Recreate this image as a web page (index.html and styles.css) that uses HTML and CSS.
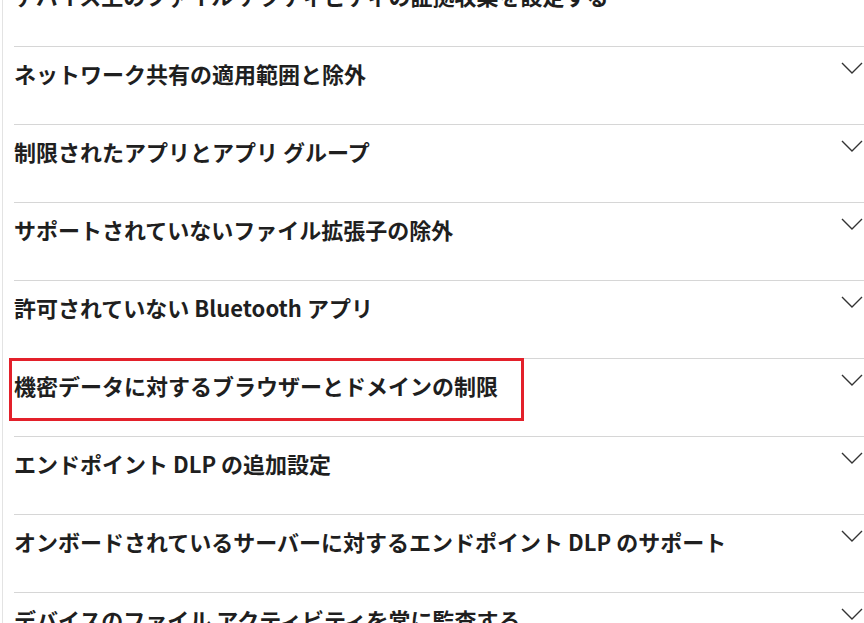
FILE: index.html
```html
<!DOCTYPE html>
<html lang="ja">
<head>
    <meta charset="UTF-8">
    <meta name="viewport" content="width=device-width, initial-scale=1.0">
    <title>エンドポイント DLP の設定</title>
    <link rel="stylesheet" href="styles.css">
</head>
<body>
    <div class="accordion">
        <div class="acc-item">
            <h3 class="acc-title">デバイス上のファイル アクティビティの証拠収集を設定する</h3>
            <svg class="chevron" viewBox="0 0 22 12"><polyline points="1,1 11,11 21,1"/></svg>
        </div>
        <div class="acc-item">
            <h3 class="acc-title">ネットワーク共有の適用範囲と除外</h3>
            <svg class="chevron" viewBox="0 0 22 12"><polyline points="1,1 11,11 21,1"/></svg>
        </div>
        <div class="acc-item">
            <h3 class="acc-title">制限されたアプリとアプリ グループ</h3>
            <svg class="chevron" viewBox="0 0 22 12"><polyline points="1,1 11,11 21,1"/></svg>
        </div>
        <div class="acc-item">
            <h3 class="acc-title">サポートされていないファイル拡張子の除外</h3>
            <svg class="chevron" viewBox="0 0 22 12"><polyline points="1,1 11,11 21,1"/></svg>
        </div>
        <div class="acc-item">
            <h3 class="acc-title">許可されていない Bluetooth アプリ</h3>
            <svg class="chevron" viewBox="0 0 22 12"><polyline points="1,1 11,11 21,1"/></svg>
        </div>
        <div class="acc-item highlighted">
            <h3 class="acc-title">機密データに対するブラウザーとドメインの制限</h3>
            <svg class="chevron" viewBox="0 0 22 12"><polyline points="1,1 11,11 21,1"/></svg>
        </div>
        <div class="acc-item">
            <h3 class="acc-title">エンドポイント DLP の追加設定</h3>
            <svg class="chevron" viewBox="0 0 22 12"><polyline points="1,1 11,11 21,1"/></svg>
        </div>
        <div class="acc-item">
            <h3 class="acc-title">オンボードされているサーバーに対するエンドポイント DLP のサポート</h3>
            <svg class="chevron" viewBox="0 0 22 12"><polyline points="1,1 11,11 21,1"/></svg>
        </div>
        <div class="acc-item">
            <h3 class="acc-title">デバイスのファイル アクティビティを常に監査する</h3>
            <svg class="chevron" viewBox="0 0 22 12"><polyline points="1,1 11,11 21,1"/></svg>
        </div>
    </div>
</body>
</html>
```

FILE: styles.css
```css
body {
    margin: 0;
    background-color: #ffffff;
    font-family: "Noto Sans CJK JP", "Noto Sans", sans-serif;
    color: #1f1f1f;
    overflow: hidden;
}
.accordion {
    margin-top: -32px;
    margin-left: 2px;
    border-left: 1px solid #e3e3e3;
    padding-left: 11px;
    min-height: 720px;
}
.acc-item {
    position: relative;
    border-top: 1px solid #d6d6d6;
    padding: 11px 0 36px 0;
}
.acc-title {
    margin: 0;
    font-size: 22px;
    font-weight: 700;
    line-height: 30px;
}
.chevron {
    position: absolute;
    top: 15px;
    right: 1px;
    width: 22px;
    height: 12px;
    fill: none;
    stroke: #333333;
    stroke-width: 1.4;
}
.highlighted::after {
    content: "";
    position: absolute;
    top: -1px;
    left: -5px;
    width: 509px;
    height: 57px;
    border: 3px solid #e3202a;
}
```
